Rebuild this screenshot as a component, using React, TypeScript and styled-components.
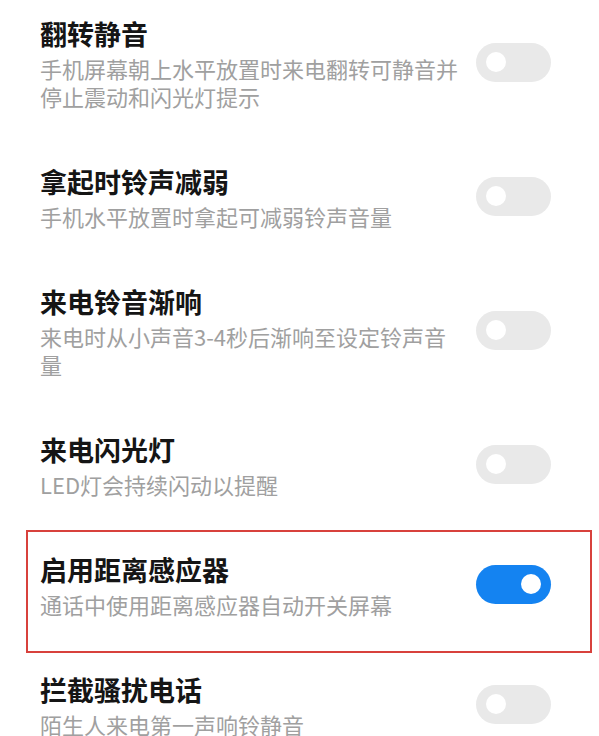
import React from 'react';
import styled, { createGlobalStyle } from 'styled-components';

const GlobalStyle = createGlobalStyle`
  html, body {
    margin: 0;
    padding: 0;
    background: #ffffff;
    overflow: hidden;
  }
  body {
    font-family: "Noto Sans CJK SC", "Noto Sans", sans-serif;
  }
`;

const List = styled.div`
  display: flex;
  flex-direction: column;
  gap: 52px;
  padding-top: 14px;
  width: 599px;
`;

const Row = styled.div<{ $marked?: boolean }>`
  position: relative;
  display: flex;
  align-items: center;
  padding: 0 48px 0 40px;

  ${props => props.$marked && `
    &::after {
      content: '';
      position: absolute;
      top: -20px;
      bottom: -35px;
      left: 26px;
      right: 7px;
      border: 2px solid #d8413c;
      pointer-events: none;
    }
  `}
`;

const Texts = styled.div`
  flex: 1;
  max-width: 425px;
  margin-right: auto;
`;

const Title = styled.div`
  font-size: 27px;
  line-height: 40px;
  font-weight: 700;
  color: #151515;
`;

const Desc = styled.div`
  font-size: 22px;
  line-height: 28px;
  color: #a0a0a0;
`;

const Track = styled.div<{ $on: boolean }>`
  flex: none;
  display: flex;
  align-items: center;
  justify-content: ${props => (props.$on ? 'flex-end' : 'flex-start')};
  width: 75px;
  height: 39px;
  padding: 0 10px;
  box-sizing: border-box;
  border-radius: 20px;
  background: ${props => (props.$on ? '#1483f1' : '#e9e9e9')};
`;

const Knob = styled.div`
  width: 20px;
  height: 20px;
  border-radius: 50%;
  background: #ffffff;
`;

interface SettingItem {
  title: string;
  desc: string;
  on: boolean;
  marked?: boolean;
}

const settings: Array<SettingItem> = [
  { title: '翻转静音', desc: '手机屏幕朝上水平放置时来电翻转可静音并停止震动和闪光灯提示', on: false },
  { title: '拿起时铃声减弱', desc: '手机水平放置时拿起可减弱铃声音量', on: false },
  { title: '来电铃音渐响', desc: '来电时从小声音3-4秒后渐响至设定铃声音量', on: false },
  { title: '来电闪光灯', desc: 'LED灯会持续闪动以提醒', on: false },
  { title: '启用距离感应器', desc: '通话中使用距离感应器自动开关屏幕', on: true, marked: true },
  { title: '拦截骚扰电话', desc: '陌生人来电第一声响铃静音', on: false },
];

function App() {
  return (
    <>
      <GlobalStyle />
      <List>
        {settings.map((item) =>
          <Row key={item.title} $marked={item.marked}>
            <Texts>
              <Title>{item.title}</Title>
              <Desc>{item.desc}</Desc>
            </Texts>
            <Track $on={item.on}>
              <Knob />
            </Track>
          </Row>
        )}
      </List>
    </>
  );
}

export default App;
